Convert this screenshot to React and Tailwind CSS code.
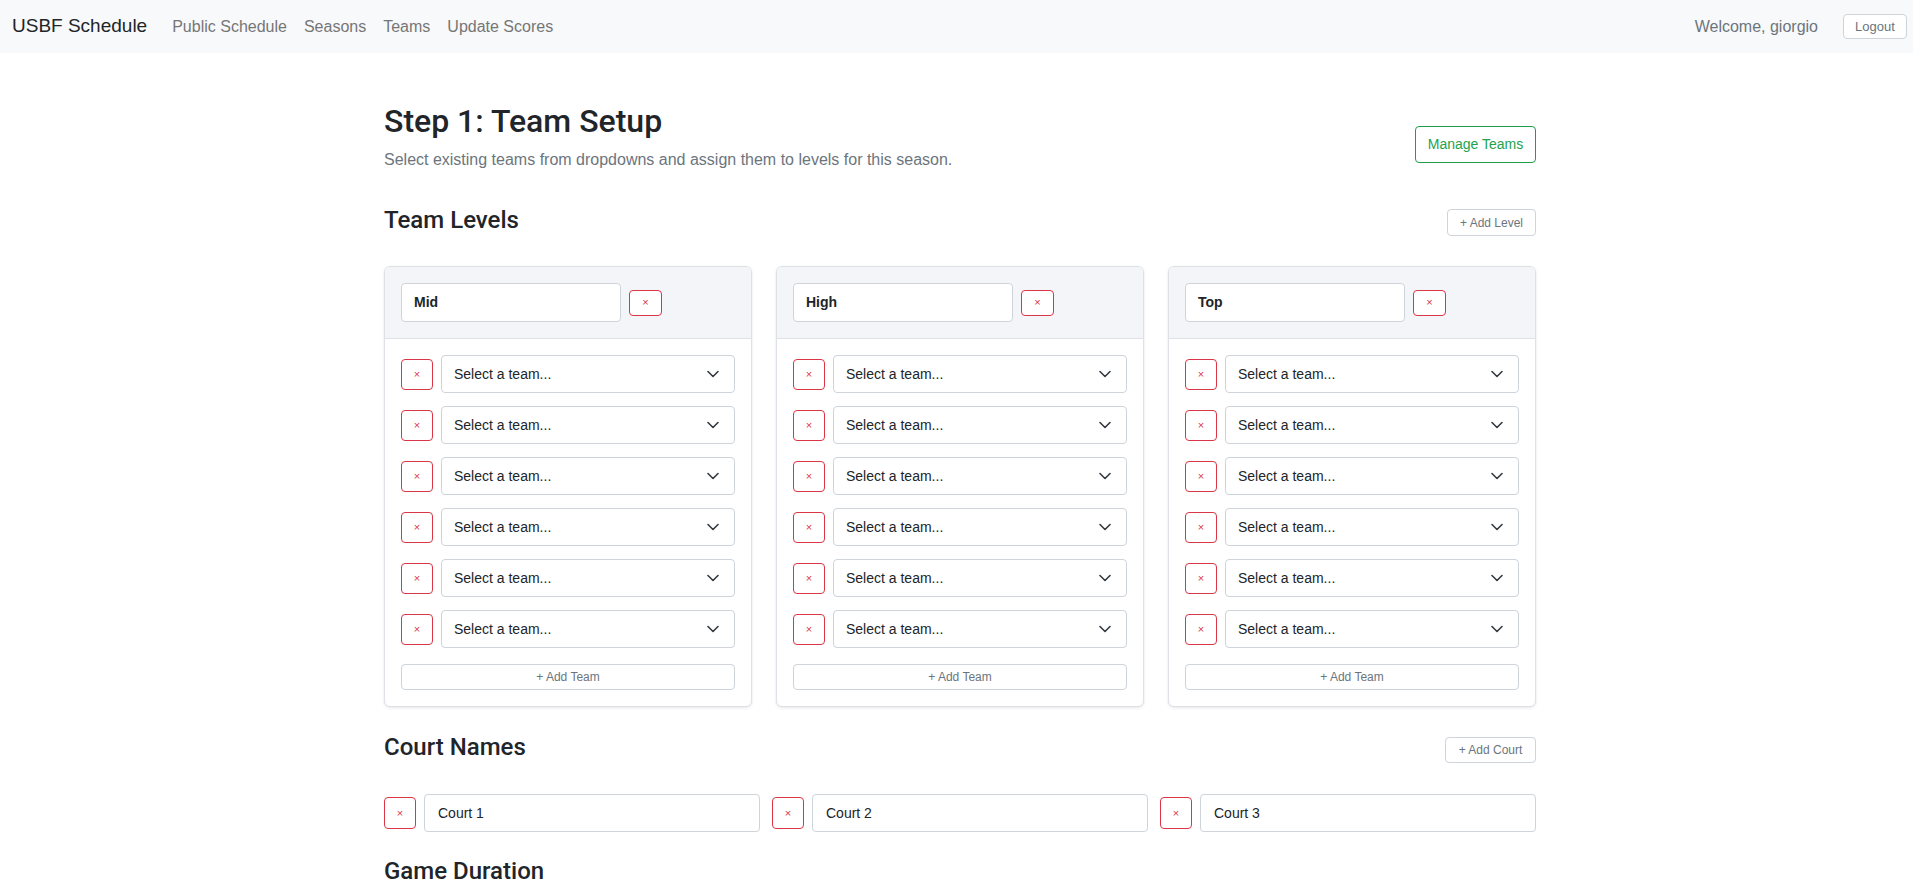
import React from "react";

const FONT = { fontFamily: '"Liberation Sans", Arial, sans-serif' };
const HEAD = { fontFamily: 'Roboto, "Liberation Sans", Arial, sans-serif' };

function Chevron() {
  return (
    <svg width="12" height="8" viewBox="0 0 12 8" fill="none" className="shrink-0">
      <polyline points="1,1.5 6,6.5 11,1.5" stroke="#343a40" strokeWidth="1.6" strokeLinecap="round" strokeLinejoin="round" />
    </svg>
  );
}

function DelBtn({ w = "w-[32px]", h = "h-[31px]" }) {
  return (
    <button className={`${w} ${h} shrink-0 flex items-center justify-center rounded-[4px] border border-[#dc3545] bg-white text-[11px] leading-none text-[#dc3545]`}>
      ×
    </button>
  );
}

function TeamRow() {
  return (
    <div className="flex items-center gap-2">
      <DelBtn />
      <div className="flex h-[38px] flex-1 items-center justify-between rounded-[4px] border border-[#ced4da] bg-white pl-[12px] pr-[15px] text-[14px] text-[#212529]">
        <span>Select a team...</span>
        <Chevron />
      </div>
    </div>
  );
}

function LevelCard({ name }) {
  return (
    <div className="overflow-hidden rounded-[6px] border border-[#dee2e6] bg-white shadow-[0_1px_3px_rgba(0,0,0,0.1)]">
      <div className="flex items-center gap-2 border-b border-[#dee2e6] bg-[#f3f5f8] p-4">
        <div className="flex h-[39px] w-[220px] items-center rounded-[4px] border border-[#ced4da] bg-white px-[12px] text-[14px] font-bold text-[#212529]">
          {name}
        </div>
        <DelBtn w="w-[33px]" h="h-[26px]" />
      </div>
      <div className="flex flex-col p-4">
        <div className="flex flex-col gap-[13px]">
          {[0, 1, 2, 3, 4, 5].map((i) => (
            <TeamRow key={i} />
          ))}
        </div>
        <button className="mt-[16px] h-[26px] w-full rounded-[4px] border border-[#ced4da] bg-white text-[12px] text-[#6c757d]">
          + Add Team
        </button>
      </div>
    </div>
  );
}

function CourtRow({ name }) {
  return (
    <div className="flex items-center gap-2">
      <DelBtn h="h-[32px]" />
      <div className="flex h-[38px] flex-1 items-center rounded-[4px] border border-[#ced4da] bg-white px-[13px] text-[14px] text-[#212529]">
        {name}
      </div>
    </div>
  );
}

export default function App() {
  return (
    <div style={FONT} className="min-h-[889px] bg-white text-[#212529]">
      <nav className="flex h-[53px] items-center bg-[#f8f9fa] pl-3 pr-[6px]">
        <span className="mr-[25px] text-[19px] text-[#212529]">USBF Schedule</span>
        <div className="flex items-center gap-[17px] text-[16px] text-[#767676]">
          <span>Public Schedule</span>
          <span>Seasons</span>
          <span>Teams</span>
          <span>Update Scores</span>
        </div>
        <div className="ml-auto flex items-center gap-[25px]">
          <span className="text-[16px] text-[#6c757d]">Welcome, giorgio</span>
          <button className="h-[25px] w-[64px] rounded-[4px] border border-[#ced4da] bg-white text-[13px] text-[#6c757d]">
            Logout
          </button>
        </div>
      </nav>

      <main className="ml-[384px] w-[1152px] pt-[49px]">
        <div className="flex justify-between">
          <div>
            <h1 style={HEAD} className="text-[32px] font-medium leading-[1.2]">Step 1: Team Setup</h1>
            <p className="mt-2 text-[16px] leading-[24px] text-[#6c757d]">
              Select existing teams from dropdowns and assign them to levels for this season.
            </p>
          </div>
          <button className="mt-[24px] h-[37px] w-[121px] rounded-[4px] border border-[#1f9d4a] bg-white text-[14px] text-[#22a34f]">
            Manage Teams
          </button>
        </div>

        <div className="mt-[32px] flex items-center justify-between">
          <h2 style={HEAD} className="text-[24px] font-medium leading-[1.2]">Team Levels</h2>
          <button className="mt-[5px] h-[27px] w-[89px] rounded-[4px] border border-[#ced4da] bg-white text-[12px] text-[#6c757d]">
            + Add Level
          </button>
        </div>

        <div className="mt-[30px] grid grid-cols-3 gap-[24px]">
          <LevelCard name="Mid" />
          <LevelCard name="High" />
          <LevelCard name="Top" />
        </div>

        <div className="mt-[25px] flex items-center justify-between">
          <h2 style={HEAD} className="text-[24px] font-medium leading-[1.2]">Court Names</h2>
          <button className="mt-[5px] h-[26px] w-[91px] rounded-[4px] border border-[#ced4da] bg-white text-[12px] text-[#6c757d]">
            + Add Court
          </button>
        </div>

        <div className="mt-[31px] grid grid-cols-3 gap-[12px]">
          <CourtRow name="Court 1" />
          <CourtRow name="Court 2" />
          <CourtRow name="Court 3" />
        </div>

        <h2 style={HEAD} className="mt-[25px] text-[24px] font-medium leading-[1.2]">Game Duration</h2>
      </main>
    </div>
  );
}
